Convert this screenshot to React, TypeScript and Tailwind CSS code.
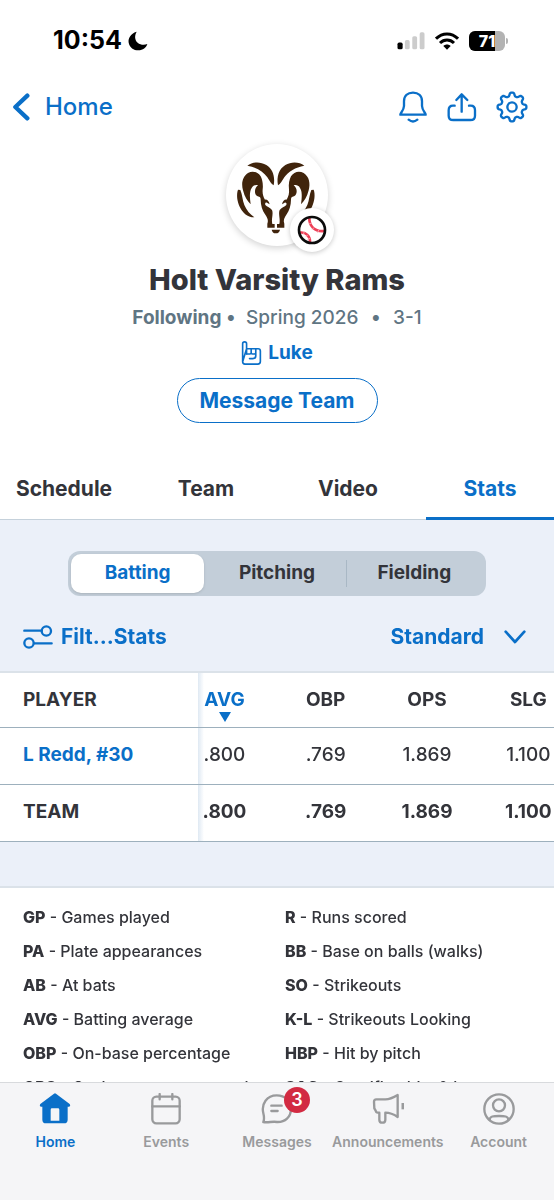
import React, { useState } from "react";

const tabs = ["Schedule", "Team", "Video", "Stats"];
const segments = ["Batting", "Pitching", "Fielding"];

interface StatRow {
  label: string;
  isPlayer: boolean;
  values: string[];
}

const rows: StatRow[] = [
  { label: "L Redd, #30", isPlayer: true, values: [".800", ".769", "1.869", "1.100"] },
  { label: "TEAM", isPlayer: false, values: [".800", ".769", "1.869", "1.100"] },
];

const legendLeft = [
  ["GP", "Games played"],
  ["PA", "Plate appearances"],
  ["AB", "At bats"],
  ["AVG", "Batting average"],
  ["OBP", "On-base percentage"],
  ["OPS", "On-base percentage plus slugging"],
];

const legendRight = [
  ["R", "Runs scored"],
  ["BB", "Base on balls (walks)"],
  ["SO", "Strikeouts"],
  ["K-L", "Strikeouts Looking"],
  ["HBP", "Hit by pitch"],
  ["SAC", "Sacrifice hits & bunts"],
];

// Eight rounded teeth around the centre
const gearPath =
  Array.from({ length: 160 }, (_, i) => {
    const a = (i / 160) * Math.PI * 2;
    const r = 38 + 5.5 * Math.tanh(1.8 * Math.cos(8 * a));
    const x = (48 + r * Math.sin(a)).toFixed(1);
    const y = (48 - r * Math.cos(a)).toFixed(1);
    return `${i === 0 ? "M" : "L"}${x} ${y}`;
  }).join("") + "Z";

const stroke = {
  fill: "none",
  stroke: "currentColor",
  strokeWidth: 7,
  strokeLinecap: "round" as const,
  strokeLinejoin: "round" as const,
};

// Edge shadow of the sticky first column
const stickyCell =
  "sticky left-0 bg-white pl-[23px] text-left font-bold after:absolute after:inset-y-0 after:left-full after:w-1.5 after:bg-linear-to-r after:from-[#dfe9f3] after:to-transparent";

function StatusBar() {
  return (
    <div className="flex h-[82px] shrink-0 items-center justify-between pl-[53px] pr-[46px] text-black">
      <div className="flex items-center gap-1.5">
        <span className="text-[25px] font-bold">10:54</span>
        <svg viewBox="0 0 60 60" className="size-5" fill="currentColor" aria-hidden="true">
          <path d="M26 2C7 8 0 22 2 35C5 50 17 58 31 58C45 58 55 49 58 39C49 43 37 42 29 35C20 27 19 13 26 2Z" />
        </svg>
      </div>
      <div className="flex items-center gap-2.5">
        <svg viewBox="0 0 86 56" className="h-[18px] w-7" aria-hidden="true">
          <rect x="1" y="33" width="16" height="21" rx="5" fill="#000" />
          <rect x="24" y="25" width="15" height="29" rx="5" fill="#ccc" />
          <rect x="47" y="13" width="15" height="41" rx="5" fill="#ccc" />
          <rect x="70" y="1" width="15" height="53" rx="5" fill="#ccc" />
        </svg>
        <svg viewBox="0 0 72 54" className="h-[18px] w-6" fill="none" stroke="#000" strokeWidth="9" aria-hidden="true">
          <path d="M3 20C22 1 50 1 69 20" />
          <path d="M15 33C27 21 45 21 57 33" />
          <path d="M25 42C31 36 41 36 47 42L36 53Z" fill="#000" stroke="none" />
        </svg>
        <div className="flex items-center">
          <div className="relative flex h-5 w-9 items-center justify-center overflow-hidden rounded-md bg-[#b3b3b3]">
            <div className="absolute inset-y-0 left-0 w-[71%] bg-black" />
            <span className="relative text-base font-extrabold text-white">71</span>
          </div>
          <div className="ml-px h-1.5 w-0.5 rounded-r bg-[#b3b3b3]" />
        </div>
      </div>
    </div>
  );
}

function TopNav() {
  return (
    <header className="flex h-[50px] shrink-0 items-center justify-between pl-3 pr-[26px] text-[#0a6fc8]">
      <a href="#home" className="flex items-center gap-[15px] text-2xl font-medium">
        <svg viewBox="0 0 54 84" className="h-7 w-[18px]" {...stroke} strokeWidth={13} aria-hidden="true">
          <path d="M46 8L10 42L46 76" />
        </svg>
        Home
      </a>
      <div className="flex items-center gap-[18px]">
        <button type="button" aria-label="Notifications">
          <svg viewBox="364 268 90 102" className="h-[34px] w-[30px]" {...stroke}>
            <path d="M371 342C371 336 381 331 382 316V302C382 285 393 276 409 276C425 276 436 285 436 302V316C437 331 447 336 447 342Z" />
            <path d="M396 357Q409 368 422 357" />
          </svg>
        </button>
        <button type="button" aria-label="Share">
          <svg viewBox="510 268 96 102" className="h-[34px] w-8" {...stroke}>
            <path d="M536 315H531Q518 315 518 329V345Q518 358 532 358H583Q597 358 597 345V329Q597 315 584 315H579" />
            <path d="M557 333V281M541 298L557 281L574 298" />
          </svg>
        </button>
        <button type="button" aria-label="Settings">
          <svg viewBox="0 0 96 96" className="size-8" {...stroke}>
            <path d={gearPath} />
            <circle cx="48" cy="48" r="14" />
          </svg>
        </button>
      </div>
    </header>
  );
}

function RamHalf() {
  return (
    <>
      <path d="M53 32C68 20 92 19 110 30C129 42 137 64 132 91C124 88 121 78 113 67C100 49 80 37 53 32Z" />
      <path d="M93 64C85 50 68 46 55 54C39 64 34 85 40 106C45 126 54 140 63 148C60 128 59 109 66 99C70 91 78 89 85 91C73 100 73 119 84 124C91 125 93 128 93 134C93 151 98 166 106 178C113 188 117 196 113 206V218H135V207H128C124 192 132 177 127 165C122 158 112 156 107 150C105 144 109 142 112 143L120 148C118 138 112 133 106 134C100 124 98 115 99 103C101 88 98 74 93 64Z" />
      <path d="M25 104C20 118 22 138 30 155C38 172 52 187 74 187C61 178 50 165 44 150C38 135 38 119 32 105Z" />
    </>
  );
}

function Avatar() {
  return (
    <div className="relative size-[102px] rounded-full bg-white shadow-[0_2px_7px_rgba(0,0,0,0.18)]">
      <svg viewBox="-11 -33 306 306" className="size-full" fill="#40240c" role="img" aria-label="Team logo">
        <RamHalf />
        <g transform="translate(277 0) scale(-1 1)">
          <RamHalf />
        </g>
        <path d="M126 224H151Q149 235 138 235Q128 235 126 224Z" />
      </svg>
      <div className="absolute -bottom-1.5 -right-1.5 flex size-11 items-center justify-center rounded-full bg-white shadow-[0_1px_5px_rgba(0,0,0,0.22)]">
        <svg viewBox="0 0 90 90" className="size-[30px]" fill="none" aria-hidden="true">
          <path d="M37 8C36 31 51 51 82 48" stroke="#ee4058" strokeWidth="8" />
          <path d="M9 53C27 50 40 64 39 82" stroke="#ee4058" strokeWidth="8" />
          <path d="M44 24L36 27M52 37L46 43M65 45L62 53M22 50L19 58M33 59L27 65M40 70L32 73" stroke="#f7a3ae" strokeWidth="3" />
          <circle cx="45" cy="45" r="39" stroke="#0b0b0b" strokeWidth="8" />
        </svg>
      </div>
    </div>
  );
}

function TeamHeader() {
  return (
    <section className="flex shrink-0 flex-col items-center pt-3">
      <Avatar />
      <h1 className="mt-4 text-[29px] leading-9 font-extrabold text-[#33343a]">Holt Varsity Rams</h1>
      <p className="mt-2 flex text-[19px] leading-6 text-[#5f7583]">
        <span className="font-bold">Following</span>
        <span className="ml-1 mr-2.5">•</span>
        <span className="font-medium">Spring 2026</span>
        <span className="mx-3">•</span>
        <span className="font-medium">3-1</span>
      </p>
      <a href="#luke" className="mt-2.5 flex items-center gap-1.5 text-[19px] leading-6 font-bold text-[#0a6fc8]">
        <svg viewBox="394 252 64 78" className="h-[26px] w-[21px]" {...stroke} strokeWidth={5} aria-hidden="true">
          <path d="M399 318V263Q399 257 405 257Q411 257 411 263V294M411 278H446Q453 278 453 285V317Q453 325 445 325H406Q399 325 399 318Z" />
          <path d="M411 294H421Q425 294 425 290V278M425 290Q425 294 429 294H435Q439 294 439 290V278M439 290V299Q439 308 430 308H420" />
        </svg>
        Luke
      </a>
      <button
        type="button"
        className="mt-3 h-[45px] rounded-full border border-[#0a6fc8] px-[22px] text-[21px] font-bold text-[#0a6fc8]"
      >
        Message Team
      </button>
    </section>
  );
}

function StatsTable() {
  return (
    <div className="overflow-x-auto border-t-2 border-[#dbe2e9] bg-white [scrollbar-width:none]">
      <table className="w-[579px] table-fixed border-collapse text-[19px] text-[#33343a]">
        <colgroup>
          <col className="w-[198px]" />
          <col className="w-[77px]" />
          <col />
          <col />
          <col />
        </colgroup>
        <thead>
          <tr className="h-[54px] border-b border-[#9db0bd]">
            <th scope="col" className={stickyCell}>
              PLAYER
            </th>
            <th scope="col" aria-sort="descending" className="pr-6 font-bold text-[#0a6fc8]">
              <button type="button" className="relative">
                AVG
                <svg viewBox="0 0 12 10" className="absolute top-full left-1/2 -mt-0.5 h-2.5 w-3 -translate-x-1/2" fill="currentColor" aria-hidden="true">
                  <path d="M0 0H12L6 10Z" />
                </svg>
              </button>
            </th>
            <th scope="col" className="font-bold">OBP</th>
            <th scope="col" className="font-bold">OPS</th>
            <th scope="col" className="font-bold">SLG</th>
          </tr>
        </thead>
        <tbody>
          {rows.map((row) => (
            <tr key={row.label} className="h-[57px] border-b border-[#9db0bd]">
              <th scope="row" className={stickyCell}>
                {row.isPlayer ? (
                  <a href="#player" className="text-[#0a6fc8]">
                    {row.label}
                  </a>
                ) : (
                  row.label
                )}
              </th>
              {row.values.map((value, i) => (
                <td
                  key={i}
                  className={`p-0 text-center ${i === 0 ? "pr-6" : ""} ${row.isPlayer ? "font-medium" : "font-bold"}`}
                >
                  {value}
                </td>
              ))}
            </tr>
          ))}
        </tbody>
      </table>
    </div>
  );
}

function Legend({ items }: { items: string[][] }) {
  return (
    <ul className="flex w-[262px] flex-col gap-2.5">
      {items.map(([abbr, text]) => (
        <li key={abbr}>
          <b className="font-extrabold">{abbr}</b> - {text}
        </li>
      ))}
    </ul>
  );
}

interface NavItem {
  label: string;
  badge?: number;
  icon: React.ReactNode;
}

const navItems: NavItem[] = [
  {
    label: "Home",
    icon: (
      <path
        d="M45 2Q48 0 51 2L92 33Q96 38 91 41H86V80Q86 91 75 91H21Q10 91 10 80V41H5Q0 38 4 33ZM39 46Q35 46 35 50V83H61V50Q61 46 57 46Z"
        fill="currentColor"
        fillRule="evenodd"
        stroke="none"
      />
    ),
  },
  {
    label: "Events",
    icon: (
      <>
        <rect x="7" y="11" width="82" height="80" rx="12" />
        <path d="M7 40H89M29 3V19M67 3V19" />
      </>
    ),
  },
  {
    label: "Messages",
    badge: 3,
    icon: (
      <>
        <path d="M7 87C11 77 9 69 7 61C0 32 18 7 47 7C73 7 90 25 90 47C90 72 72 88 48 87C34 84 22 90 7 87Z" />
        <path d="M31 38H62M31 54H50" />
      </>
    ),
  },
  {
    label: "Announcements",
    icon: (
      <>
        <path d="M6 26Q6 19 13 19H40C54 19 64 14 77 6V72C64 63 54 59 40 59V80Q40 89 31 89Q22 89 22 80V59H17Q12 59 11 53L7 46Z" />
        <path d="M93 30V49" strokeLinecap="butt" strokeWidth={9} />
      </>
    ),
  },
  {
    label: "Account",
    icon: (
      <>
        <circle cx="48" cy="48" r="44" />
        <circle cx="48" cy="37" r="18" />
        <path d="M20 81C20 69 32 69 48 69C64 69 76 69 76 81" />
      </>
    ),
  },
];

function BottomNav() {
  return (
    <nav className="grid h-[118px] shrink-0 grid-cols-5 border-t border-[#d8dadd] bg-[#f5f5f7]">
      {navItems.map((item) => (
        <a
          key={item.label}
          href={`#${item.label.toLowerCase()}`}
          className={`flex flex-col items-center pt-2.5 text-sm font-semibold ${
            item.label === "Home" ? "text-[#0a6fc8]" : "text-[#999a9c]"
          }`}
        >
          <span className="relative">
            <svg viewBox="0 0 96 96" className="size-8" {...stroke} aria-hidden="true">
              {item.icon}
            </svg>
            {item.badge && (
              <span className="absolute -top-1.5 left-[23px] flex size-[26px] items-center justify-center rounded-full bg-[#d22a42] text-lg font-semibold text-white">
                {item.badge}
              </span>
            )}
          </span>
          <span className="mt-[7px]">{item.label}</span>
        </a>
      ))}
    </nav>
  );
}

export default function App() {
  const [activeTab, setActiveTab] = useState("Stats");
  const [segment, setSegment] = useState("Batting");

  return (
    <div className="flex h-screen flex-col overflow-hidden bg-white font-[Inter,sans-serif] text-[#33343a]">
      <StatusBar />
      <TopNav />
      <TeamHeader />

      <div role="tablist" className="mt-[37px] flex h-[60px] shrink-0 justify-between border-b border-[#c5d1db]">
        {tabs.map((tab) => (
          <button
            key={tab}
            type="button"
            role="tab"
            aria-selected={activeTab === tab}
            onClick={() => setActiveTab(tab)}
            className={`-mb-px w-32 border-b-3 text-[21px] font-bold ${
              activeTab === tab ? "border-[#0a6fc8] text-[#0a6fc8]" : "border-transparent"
            }`}
          >
            {tab}
          </button>
        ))}
      </div>

      <main className="min-h-0 flex-1 overflow-hidden bg-[#ebf0f9]">
        <div className="mx-[68px] mt-[31px] flex h-[45px] rounded-xl bg-[#c3ced9] p-[3px]">
          {segments.map((name) => (
            <button
              key={name}
              type="button"
              aria-pressed={segment === name}
              onClick={() => setSegment(name)}
              className="relative flex-1"
            >
              <span
                className={`flex h-full items-center justify-center rounded-[10px] text-[19px] font-bold ${
                  segment === name ? "mr-1 bg-white text-[#0a6fc8] shadow" : ""
                }`}
              >
                {name}
              </span>
              {name === "Fielding" && segment !== name && (
                <span className="absolute inset-y-1.5 left-0 w-px bg-[#a9b8c5]" />
              )}
            </button>
          ))}
        </div>

        <div className="flex h-[75px] items-center justify-between pt-1.5 pl-[23px] pr-7 text-[21px] font-bold text-[#0a6fc8]">
          <button type="button" className="flex items-center gap-2">
            <svg viewBox="0 0 90 72" className="h-6 w-[30px]" {...stroke} aria-hidden="true">
              <path d="M4 17H56M34 55H86" />
              <circle cx="70" cy="18" r="14" />
              <circle cx="18" cy="54" r="14" />
            </svg>
            Filt...Stats
          </button>
          <button type="button" className="flex items-center gap-5">
            Standard
            <svg viewBox="0 0 66 42" className="h-3.5 w-[22px]" {...stroke} strokeWidth={8} aria-hidden="true">
              <path d="M5 5L33 36L61 5" />
            </svg>
          </button>
        </div>

        <StatsTable />

        <div className="mt-11 flex border-t-2 border-[#dbe2e9] bg-white pt-[17px] pl-[23px] text-base font-medium">
          <Legend items={legendLeft} />
          <Legend items={legendRight} />
        </div>
      </main>

      <BottomNav />
    </div>
  );
}
